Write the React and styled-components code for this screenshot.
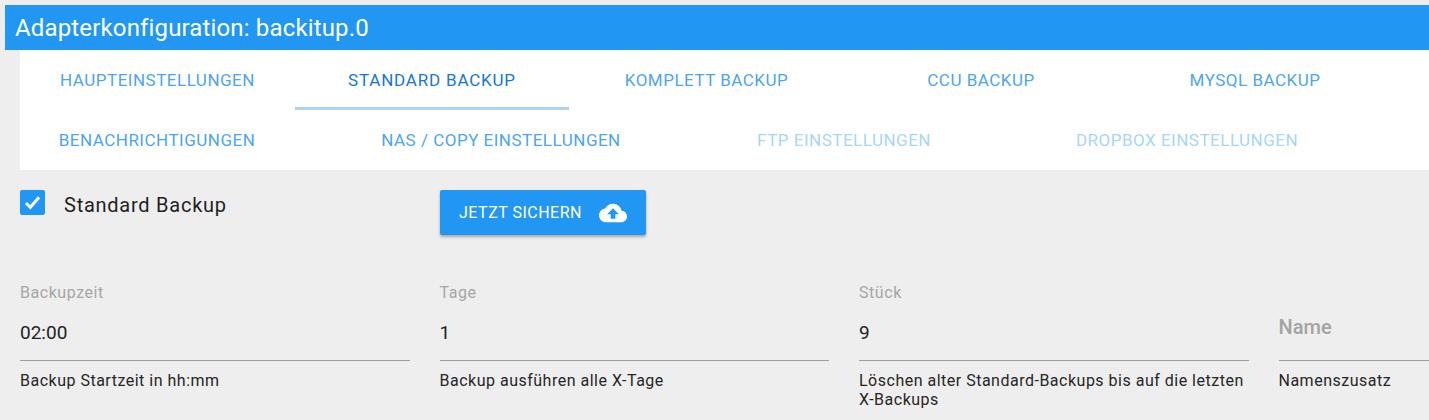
import React from 'react';
import styled, { createGlobalStyle } from 'styled-components';

const GlobalStyle = createGlobalStyle`
    html, body {
        margin: 0;
        padding: 0;
        background: #eeeeee;
        font-family: Roboto, "Liberation Sans", sans-serif;
        overflow: hidden;
    }
`

const Page = styled.div`
    width: 1429px;
    height: 420px;
    padding: 5px 0 0 5px;
    box-sizing: border-box;
    overflow: hidden;
`

const TitleBar = styled.div`
    height: 45px;
    padding-left: 10px;
    display: flex;
    align-items: center;
    background: #2196f3;
    color: white;
    font-size: 24px;
    letter-spacing: 0.15px;
`

const Content = styled.div`
    padding-left: 15px;
`

const TabPanel = styled.div`
    background: white;
`

const TabRow = styled.div`
    height: 60px;
    display: grid;
    grid-template-columns: ${props => props.$columns};
`

const Tab = styled.div`
    display: flex;
    align-items: center;
    justify-content: center;
    padding-top: 3px;
    font-size: 17px;
    letter-spacing: ${props => props.$active ? '0.8px' : '0.5px'};
    color: ${props => props.$active ? '#1976d2' : props.$disabled ? '#a9d5f9' : '#4ea5ec'};
    border-bottom: 3px solid ${props => props.$active ? '#aed4f3' : 'transparent'};
    box-sizing: border-box;
    white-space: nowrap;
`

const ActionRow = styled.div`
    display: flex;
    padding-top: 20px;
    height: 45px;
`

const CheckGroup = styled.label`
    width: 420px;
    display: flex;
    align-items: flex-start;
    font-size: 20px;
    letter-spacing: 0.75px;
    color: #1f1f1f;
`

const CheckBox = styled.span`
    width: 25px;
    height: 25px;
    border-radius: 2px;
    background: #2196f3;
    display: flex;
    align-items: center;
    justify-content: center;
    margin-right: 19px;
`

const CheckText = styled.span`
    line-height: 30px;
`

const SaveButton = styled.button`
    width: 206px;
    height: 45px;
    padding: 0 19px;
    border: 0;
    border-radius: 2px;
    background: #2196f3;
    color: white;
    font-family: inherit;
    font-size: 16px;
    letter-spacing: 0.5px;
    display: flex;
    align-items: center;
    justify-content: space-between;
    box-shadow: 0 2px 3px rgba(0, 0, 0, 0.3);
`

const FieldGrid = styled.div`
    margin-top: 48px;
    display: grid;
    grid-template-columns: repeat(4, 389.5px);
    column-gap: 30px;
`

const Label = styled.div`
    height: 20px;
    line-height: 20px;
    font-size: 16px;
    letter-spacing: 0.55px;
    color: #a6a6a6;
`

const InputLine = styled.div`
    height: 58px;
    box-sizing: border-box;
    border-bottom: 1px solid #9e9e9e;
    display: flex;
    align-items: center;
    padding: ${props => props.$empty ? '0 0 9px' : '2px 0 0'};
    font-size: ${props => props.$empty ? '20px' : '19px'};
    color: ${props => props.$empty ? '#a3a3a3' : '#222222'};
    font-weight: ${props => props.$empty ? 500 : 400};
`

const Helper = styled.div`
    margin-top: 10px;
    font-size: 16px;
    letter-spacing: 0.5px;
    line-height: 19px;
    color: #262626;
`

const fields = [
    { label: 'Backupzeit', value: '02:00', helper: 'Backup Startzeit in hh:mm' },
    { label: 'Tage', value: '1', helper: 'Backup ausführen alle X-Tage' },
    { label: 'Stück', value: '9', helper: 'Löschen alter Standard-Backups bis auf die letzten X-Backups' },
    { placeholder: 'Name', helper: 'Namenszusatz' },
]

function Check() {
    return (
        <svg width="21" height="21" viewBox="0 0 24 24" fill="none" stroke="white" strokeWidth="3.4">
            <path d="M4.5 12.5l5 5L19.5 6" />
        </svg>
    )
}

function CloudUpload() {
    return (
        <svg width="28" height="28" viewBox="0 0 24 24" fill="white">
            <path d="M19.35 10.04C18.67 6.59 15.64 4 12 4 9.11 4 6.6 5.64 5.35 8.04 2.34 8.36 0 10.91 0 14c0 3.31 2.69 6 6 6h13c2.76 0 5-2.24 5-5 0-2.64-2.05-4.78-4.65-4.96zM14 13v4h-4v-4H7l5-5 5 5h-3z" />
        </svg>
    )
}

export default function App() {
    return (
        <Page>
            <GlobalStyle />
            <TitleBar>Adapterkonfiguration: backitup.0</TitleBar>
            <Content>
                <TabPanel>
                    <TabRow $columns="275px 274px 275px 274px 274px">
                        <Tab>HAUPTEINSTELLUNGEN</Tab>
                        <Tab $active>STANDARD BACKUP</Tab>
                        <Tab>KOMPLETT BACKUP</Tab>
                        <Tab>CCU BACKUP</Tab>
                        <Tab>MYSQL BACKUP</Tab>
                    </TabRow>
                    <TabRow $columns="274px 414px 272px 414px">
                        <Tab>BENACHRICHTIGUNGEN</Tab>
                        <Tab>NAS / COPY EINSTELLUNGEN</Tab>
                        <Tab $disabled>FTP EINSTELLUNGEN</Tab>
                        <Tab $disabled>DROPBOX EINSTELLUNGEN</Tab>
                    </TabRow>
                </TabPanel>
                <ActionRow>
                    <CheckGroup>
                        <CheckBox><Check /></CheckBox>
                        <CheckText>Standard Backup</CheckText>
                    </CheckGroup>
                    <SaveButton>JETZT SICHERN <CloudUpload /></SaveButton>
                </ActionRow>
                <FieldGrid>
                    {fields.map(field => (
                        <div key={field.helper}>
                            <Label>{field.label}</Label>
                            <InputLine $empty={!field.value}>{field.value || field.placeholder}</InputLine>
                            <Helper>{field.helper}</Helper>
                        </div>
                    ))}
                </FieldGrid>
            </Content>
        </Page>
    )
}
